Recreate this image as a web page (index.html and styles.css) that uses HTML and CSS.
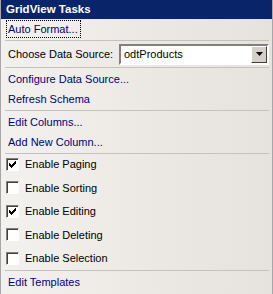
FILE: index.html
```html
<!DOCTYPE html>
<html lang="en">
<head>
    <meta charset="UTF-8">
    <title>GridView Tasks</title>
    <link rel="stylesheet" href="styles.css">
</head>
<body>
    <div class="panel">
        <div class="panel-header">GridView Tasks</div>

        <div class="section first">
            <a href="#" class="task focused">Auto Format...</a>
        </div>

        <div class="section source">
            <span class="label">Choose Data Source:</span>
            <div class="dropdown">
                <span class="value">odtProducts</span>
                <span class="arrow"><svg width="7" height="4" viewBox="0 0 7 4"><path d="M0 0h7L3.5 4z" fill="#000"/></svg></span>
            </div>
        </div>

        <div class="section">
            <a href="#" class="task">Configure Data Source...</a>
            <a href="#" class="task">Refresh Schema</a>
        </div>

        <div class="section">
            <a href="#" class="task">Edit Columns...</a>
            <a href="#" class="task">Add New Column...</a>
        </div>

        <div class="section checks">
            <label class="check"><span class="box checked"></span>Enable Paging</label>
            <label class="check"><span class="box"></span>Enable Sorting</label>
            <label class="check"><span class="box checked"></span>Enable Editing</label>
            <label class="check"><span class="box"></span>Enable Deleting</label>
            <label class="check"><span class="box"></span>Enable Selection</label>
        </div>

        <div class="section last">
            <a href="#" class="task">Edit Templates</a>
        </div>
    </div>
</body>
</html>
```

FILE: styles.css
```css
body {
    margin: 0;
    padding: 0;
    font-family: "Liberation Sans", Arial, sans-serif;
    font-size: 11px;
    color: #000;
}

.panel {
    width: 271px;
    height: 294px;
    border-left: 1px solid #a7a6aa;
    border-right: 1px solid #a7a6aa;
    background: linear-gradient(to right, #f3f1ee, #e6e2dd);
    overflow: hidden;
}

.panel-header {
    height: 19px;
    line-height: 18px;
    padding-left: 5px;
    background: #0a246a;
    color: #fff;
    font-weight: bold;
    font-size: 11.5px;
}

.section {
    display: flex;
    flex-direction: column;
    margin: 0 3px 0 4px;
    padding: 1px 0;
    border-bottom: 1px solid #c5c2bd;
}

.section.first {
    padding: 1px 0 2px;
}

.section.last {
    border-bottom: none;
}

.task {
    display: block;
    color: #00007f;
    text-decoration: none;
    height: 20px;
    line-height: 20px;
    padding-left: 3px;
    white-space: nowrap;
}

.task.focused {
    align-self: flex-start;
    height: 18px;
    line-height: 18px;
    padding: 0 3px 0 2px;
    margin-left: 1px;
    outline: 1px dotted #000;
    outline-offset: -1px;
}

.source {
    flex-direction: row;
    align-items: center;
    height: 22px;
    padding: 2px 0;
}

.label {
    flex-shrink: 0;
    box-sizing: border-box;
    width: 114px;
    padding-left: 3px;
    white-space: nowrap;
}

.dropdown {
    flex: 1;
    display: flex;
    align-items: center;
    height: 17px;
    background: #fff;
    border: 2px solid;
    border-color: #808080 #fff #fff #808080;
}

.value {
    flex: 1;
    padding-left: 3px;
}

.arrow {
    width: 16px;
    height: 17px;
    display: flex;
    align-items: center;
    justify-content: center;
    background: #d4d0c8;
    border: 1px solid;
    border-color: #fff #404040 #404040 #fff;
    box-sizing: border-box;
}

.checks {
    padding: 2px 0 4px;
    gap: 7.5px;
}

.check {
    display: flex;
    align-items: center;
    height: 16px;
    padding-left: 1px;
}

.box {
    width: 11px;
    height: 11px;
    margin-right: 6px;
    background: #fff;
    border: 1px solid;
    border-color: #808080 #fff #fff #808080;
    box-shadow: inset 1px 1px 0 #404040;
    position: relative;
}

.box.checked::after {
    content: "";
    position: absolute;
    left: 2px;
    top: 2px;
    width: 7px;
    height: 7px;
    background: url("data:image/svg+xml;utf8,<svg xmlns='http://www.w3.org/2000/svg' width='7' height='7'><path d='M0 2h1v1h1v1h1V3h1V2h1V1h1V0h1v3h-1v1h-1v1h-1v1h-1v1H2V6H1V5H0z' fill='black'/></svg>") no-repeat;
}
```
